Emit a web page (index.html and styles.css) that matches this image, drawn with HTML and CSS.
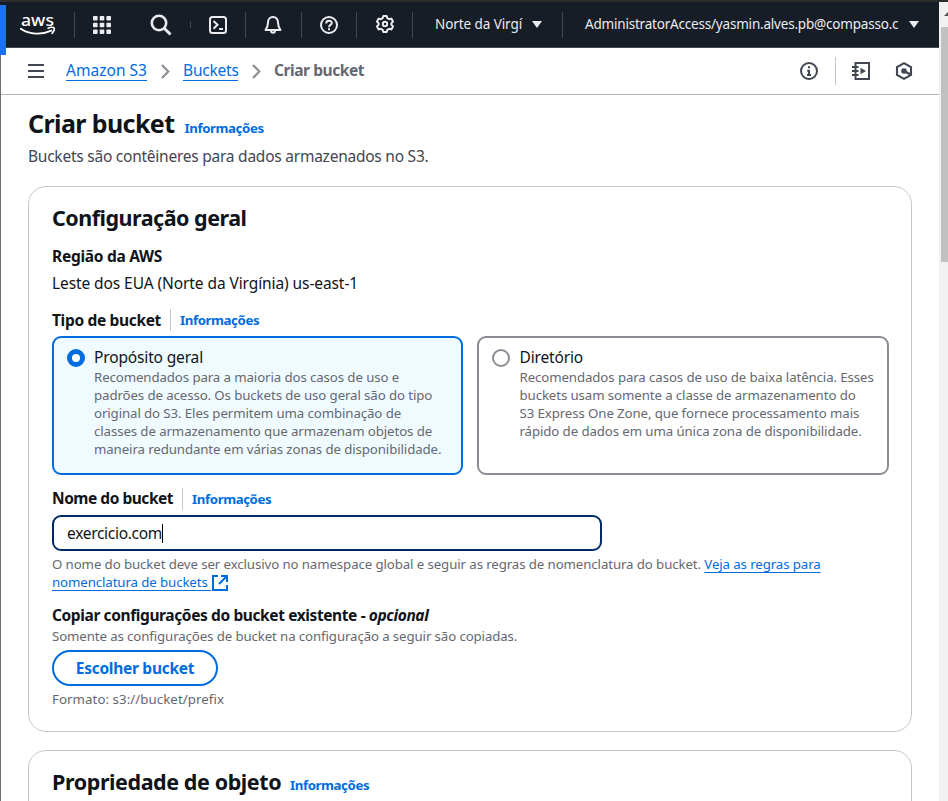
FILE: index.html
```html
<!DOCTYPE html>
<html lang="pt-BR">
<head>
<meta charset="utf-8">
<title>Criar bucket</title>
<link rel="stylesheet" href="styles.css">
</head>
<body>
<div class="window">
  <div class="page">
    <header class="topnav">
      <div class="cell logo">
        <svg width="36" height="24" viewBox="0 0 36 24"><text x="1" y="12.5" class="logo-text" textLength="33" lengthAdjust="spacingAndGlyphs">aws</text><path d="M0.8 15.8C9.5 21.8 22 22 31.2 17.6" fill="none" stroke="#fff" stroke-width="1.9" stroke-linecap="round"/><path d="M28 15.2C30.7 14 33.7 14.2 34.2 15C34.6 16.2 33.5 18.9 32 20.4" fill="none" stroke="#fff" stroke-width="1.5" stroke-linecap="round"/></svg>
      </div>
      <div class="cell apps">
        <svg width="18" height="18" viewBox="0 0 18 18" fill="#ebebf0"><rect width="4.6" height="4.6" rx=".8"/><rect x="6.7" width="4.6" height="4.6" rx=".8"/><rect x="13.4" width="4.6" height="4.6" rx=".8"/><rect y="6.7" width="4.6" height="4.6" rx=".8"/><rect x="6.7" y="6.7" width="4.6" height="4.6" rx=".8"/><rect x="13.4" y="6.7" width="4.6" height="4.6" rx=".8"/><rect y="13.4" width="4.6" height="4.6" rx=".8"/><rect x="6.7" y="13.4" width="4.6" height="4.6" rx=".8"/><rect x="13.4" y="13.4" width="4.6" height="4.6" rx=".8"/></svg>
      </div>
      <div class="cell search">
        <svg width="22" height="22" viewBox="0 0 22 22" fill="none" stroke="#ebebf0"><circle cx="9" cy="9" r="7.2" stroke-width="2.6"/><path d="M14.2 14.2L20.5 20.5" stroke-width="3"/></svg>
      </div>
      <div class="cell shell">
        <svg width="18" height="18" viewBox="0 0 18 18" fill="none" stroke="#ebebf0" stroke-width="2"><rect x="1" y="1" width="16" height="16" rx="2.5"/><path d="M4.5 5L8.5 8.8L4.5 12.8M10 13H14"/></svg>
      </div>
      <div class="cell bell">
        <svg width="18" height="20" viewBox="0 0 18 20" fill="none" stroke="#ebebf0" stroke-width="2" stroke-linejoin="round"><path d="M9 2C5.8 2 4 4.4 4 7.4C4 11 3.3 12.6 1.5 15H16.5C14.7 12.6 14 11 14 7.4C14 4.4 12.2 2 9 2Z"/><path d="M7 15.5C7 18.6 11 18.6 11 15.5"/></svg>
      </div>
      <div class="cell help">
        <svg width="18" height="18" viewBox="0 0 18 18" fill="none" stroke="#ebebf0" stroke-width="2"><circle cx="9" cy="9" r="8"/><path d="M6.2 7.4C6.2 3.8 11.8 4 11.8 7C11.8 9 9 8.8 9 11.2M9 12.2V14.2"/></svg>
      </div>
      <div class="cell gear">
        <svg width="18" height="18" viewBox="0 0 18 18" fill="none" stroke="#ebebf0" stroke-width="2" stroke-linejoin="round"><path d="M7.3 1H10.7L11.3 3.2L13.1 4.2L15.3 3.6L17 6.6L15.4 8.2V9.8L17 11.4L15.3 14.4L13.1 13.8L11.3 14.8L10.7 17H7.3L6.7 14.8L4.9 13.8L2.7 14.4L1 11.4L2.6 9.8V8.2L1 6.6L2.7 3.6L4.9 4.2L6.7 3.2Z"/><circle cx="9" cy="9" r="2.2"/></svg>
      </div>
      <div class="cell region"><span class="region-name">Norte da Virgí</span><i class="caret"></i></div>
      <div class="cell account"><span class="account-name">AdministratorAccess/yasmin.alves.pb@compasso.c</span><i class="caret"></i></div>
    </header>

    <nav class="crumbs">
      <svg class="menu" width="16" height="14" viewBox="0 0 16 14" stroke="#424650" stroke-width="2"><path d="M0 1H16M0 7H16M0 13H16"/></svg>
      <a class="crumb c-s3">Amazon S3</a>
      <svg class="chev" width="9" height="15" viewBox="0 0 9 15" fill="none" stroke="#8c8c94" stroke-width="2.2"><path d="M1 1L7.3 7.5L1 14"/></svg>
      <a class="crumb c-buckets">Buckets</a>
      <svg class="chev" width="9" height="15" viewBox="0 0 9 15" fill="none" stroke="#8c8c94" stroke-width="2.2"><path d="M1 1L7.3 7.5L1 14"/></svg>
      <span class="current">Criar bucket</span>
      <div class="tools">
        <svg width="18" height="18" viewBox="0 0 18 18" fill="none" stroke="#424650" stroke-width="2"><circle cx="9" cy="9" r="8"/><path d="M9 4.2V6.2M7.2 8.8H9V13M7 13H11"/></svg>
        <i class="rule"></i>
        <svg class="tutorial" width="18" height="18" viewBox="0 0 18 18" fill="none" stroke="#424650" stroke-width="2"><path d="M3.5 4V1H17V17H3.5V14M3.5 3V15M0 5H6.5M0 9H6.5M0 13H6.5"/><path d="M8.5 5.8L14 9L8.5 12.2Z" fill="#424650" stroke="none"/></svg>
        <svg class="hex" width="18" height="18" viewBox="0 0 18 18" fill="none" stroke="#424650" stroke-width="2.1"><path d="M9 1.2L16 5V13L9 16.8L2 13V5Z"/><circle cx="9" cy="9" r="2.8" fill="#424650" stroke="none"/><path d="M9 9L15 12.2" stroke-width="2.4"/></svg>
      </div>
    </nav>

    <main class="content">
      <div class="title"><h1>Criar bucket</h1><a class="info">Informações</a></div>
      <p class="subtitle">Buckets são contêineres para dados armazenados no S3.</p>

      <section class="card general">
        <h2>Configuração geral</h2>
        <div class="label l-region">Região da AWS</div>
        <div class="value">Leste dos EUA (Norte da Virgínia) us-east-1</div>

        <div class="field-head type"><span class="label">Tipo de bucket</span><a class="info">Informações</a></div>
        <div class="tiles">
          <div class="tile selected">
            <i class="radio"></i>
            <div><div class="tile-name">Propósito geral</div>
            <p class="hint">Recomendados para a maioria dos casos de uso e<br>padrões de acesso. Os buckets de uso geral são do tipo<br>original do S3. Eles permitem uma combinação de<br>classes de armazenamento que armazenam objetos de<br>maneira redundante em várias zonas de disponibilidade.</p></div>
          </div>
          <div class="tile">
            <i class="radio"></i>
            <div><div class="tile-name">Diretório</div>
            <p class="hint">Recomendados para casos de uso de baixa latência. Esses<br>buckets usam somente a classe de armazenamento do<br>S3 Express One Zone, que fornece processamento mais<br>rápido de dados em uma única zona de disponibilidade.</p></div>
          </div>
        </div>

        <div class="field-head name"><span class="label l-name">Nome do bucket</span><a class="info">Informações</a></div>
        <div class="input"><span>exercicio.com</span><i class="cursor"></i></div>
        <p class="hint rules">O nome do bucket deve ser exclusivo no namespace global e seguir as regras de nomenclatura do bucket. <a class="link">Veja as regras para</a><br><a class="link">nomenclatura de buckets <svg class="external" width="16" height="16" viewBox="0 0 16 16" fill="none" stroke="#006ce0" stroke-width="2"><path d="M6 1H1V15H15V10M9 1H15V7M15 1L7 9"/></svg></a></p>

        <div class="label l-copy">Copiar configurações do bucket existente - <em>opcional</em></div>
        <p class="hint">Somente as configurações de bucket na configuração a seguir são copiadas.</p>
        <button class="choose">Escolher bucket</button>
        <p class="hint format">Formato: s3://bucket/prefix</p>
      </section>

      <section class="card object">
        <div class="title"><h2 class="h-object">Propriedade de objeto</h2><a class="info">Informações</a></div>
      </section>
    </main>
  </div>
  <div class="scrollbar"><i class="arrow"></i><i class="thumb"></i></div>
  <i class="side-tab"></i>
</div>
</body>
</html>
```
FILE: styles.css
```css
* { box-sizing: border-box; }
body { margin: 0; font-family: "Noto Sans", sans-serif; font-size: 15.5px; color: #0f141a; background: #fff; overflow: hidden; }
h1, h2, p { margin: 0; }
svg { display: block; flex: none; overflow: visible; }
.window { position: relative; display: flex; height: 801px; overflow: hidden; border-top: 2px solid #2d2d2d; white-space: nowrap; }
.page { width: 939px; border-left: 1px solid #6f6f6f; }
.side-tab { position: absolute; left: 0; top: 3px; width: 6px; height: 50px; background: #1a73e8; }

.topnav { display: flex; align-items: center; height: 46px; margin-left: -1px; background: #161d26; border-bottom: 1px solid #424650; color: #ebebf0; font-size: 13.5px; }
.cell { display: flex; align-items: center; justify-content: center; height: 26px; border-right: 1px solid #424650; }
.logo { width: 75px; padding: 1px 0 0 1px; }
.logo-text { font: 500 17px "Noto Sans", sans-serif; fill: #fff; }
.apps { width: 54px; border: 0; }
.search { width: 62px; height: 7px; padding-left: 3px; }
.shell { width: 55px; }
.bell { width: 56px; padding-right: 2px; }
.help { width: 55px; }
.gear { width: 56px; padding-bottom: 2px; }
.region { width: 150px; justify-content: flex-start; padding-left: 22px; }
.region-name { letter-spacing: -.08px; width: 97px; margin-top: -2px; }
.account { border: 0; padding-left: 22px; justify-content: flex-start; }
.account-name { letter-spacing: -.2px; width: 324px; margin-top: -2px; }
.caret { border: 5px solid transparent; border-top: 7px solid #ebebf0; border-bottom: 0; margin-top: 0; }

.crumbs { display: flex; align-items: center; height: 47px; padding-left: 27px; border-bottom: 1px solid #b4b4bb; }
.menu { margin-right: 22px; }
.crumb { color: #006ce0; height: 20px; line-height: 18px; border-bottom: 1px solid #006ce0; }
.c-s3 { width: 81px; letter-spacing: .03px; }
.c-buckets { width: 55px; letter-spacing: -.2px; }
.chev { margin: 0 13px 0 14px; }
.current { font-weight: 700; color: #656871; letter-spacing: -.43px; margin-top: -2px; }
.tools { display: flex; align-items: center; margin-left: auto; padding-right: 26px; }
.rule { width: 1px; height: 28px; background: #c6c6cd; margin: 0 16px 0 17px; }
.hex { margin-left: 25px; }

.content { padding: 10px 27px 0; }
.title { display: flex; align-items: baseline; }
h1 { font-size: 25px; line-height: 36px; font-weight: 700; letter-spacing: -.6px; width: 156.5px; }
h2 { font-size: 21.5px; line-height: 28px; font-weight: 700; letter-spacing: -.5px; }
.h-object { letter-spacing: -.42px; width: 238px; }
.info { font-size: 13.25px; font-weight: 700; letter-spacing: -.41px; color: #006ce0; }
.subtitle { line-height: 22px; margin-top: 4px; color: #424650; letter-spacing: -.24px; }
.card { width: 884px; border: 1px solid #c6c6cd; border-radius: 18px; padding: 17px 23px 0; }
.general { height: 546px; margin-top: 19px; }
.object { height: 120px; margin-top: 18px; }
.label { font-weight: 700; line-height: 22px; letter-spacing: -.33px; }
.l-region { margin-top: 13px; letter-spacing: -.27px; }
.value { line-height: 22px; margin-top: 5px; letter-spacing: -.09px; }
.field-head { display: flex; align-items: center; height: 22px; }
.field-head .label { margin-top: -1px; }
.field-head .info { border-left: 1px solid #c6c6cd; margin-left: 9px; padding-left: 9px; line-height: 22px; }
.type { margin-top: 15px; }
.name { margin-top: 13px; }
.field-head .l-name { letter-spacing: -.47px; margin-top: -2px; }

.tiles { display: flex; gap: 14px; margin: 5px 0 0; }
.tile { flex: none; display: flex; width: 412px; height: 139px; border: 2px solid #8c8c94; border-radius: 9px; padding: 9px 0 0 13px; }
.tile.selected { width: 411px; border-color: #006ce0; background: #f0fbff; }
.radio { flex: none; width: 18px; height: 18px; margin: 2px 9.5px 0 0; border: 2px solid #8c8c94; border-radius: 50%; background: #fff; }
.selected .radio { border: 5px solid #006ce0; margin-right: 9px; }
.tile-name { line-height: 21px; letter-spacing: -.15px; }
.hint { font-size: 13.25px; line-height: 18px; color: #656871; letter-spacing: -.1px; }
.input { display: flex; align-items: center; width: 550px; height: 36px; margin-top: 5px; padding-left: 13px; border: 2px solid #002b66; border-radius: 9px; letter-spacing: -.3px; }
.cursor { width: 1px; height: 19px; background: #000; }
.rules { margin-top: 4px; }
.link { color: #006ce0; text-decoration: underline; text-decoration-thickness: 1px; text-underline-offset: 3px; }
.external { display: inline-block; vertical-align: -4px; margin-left: 1px; }
.l-copy { margin-top: 13px; letter-spacing: -.39px; }
.l-copy + .hint { margin-top: 1px; letter-spacing: -.11px; }
.choose { display: block; width: 166px; height: 36px; margin: 5px 0 4px; padding: 0; border: 2px solid #006ce0; border-radius: 18px; background: #fff; color: #006ce0; font: 700 15.5px "Noto Sans", sans-serif; letter-spacing: -.28px; }
.format { letter-spacing: .07px; }

.scrollbar { width: 9px; background: #f1f1f1; overflow: hidden; }
.arrow { display: block; width: 0; margin: 10px 0 11px 5px; border: 4px solid transparent; border-top: 0; border-bottom: 4px solid #505050; }
.thumb { display: block; height: 235px; margin-left: 2px; background: #c1c1c1; }
```
